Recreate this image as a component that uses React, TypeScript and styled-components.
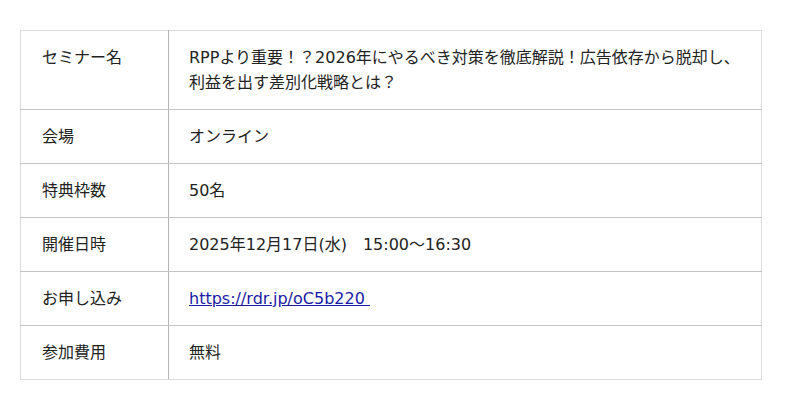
import React from "react";
import styled, { createGlobalStyle } from "styled-components";

const GlobalStyle = createGlobalStyle`
body {
  margin: 0;
  background: #fff;
}
`

const Page = styled.div`
padding: 30px 38px 0 20px;
font-family: "DejaVu Sans", "Noto Sans CJK JP", sans-serif;
font-size: 16px;
line-height: 25px;
color: #222;
`

const Table = styled.table`
width: 742px;
border-collapse: collapse;
border: 1px solid #dcdcdc;
`

const Cell = styled.td`
padding: 14px 21px;
vertical-align: top;
text-align: left;
border-bottom: 1px solid #c4c4c4;
tr:last-child > & {
  border-bottom: 1px solid #dcdcdc;
}
`

const Label = styled(Cell)`
width: 105px;
border-right: 1px solid #b4b4b4;
`

const Value = styled(Cell)`
padding: 14px 8px 14px 20px;
`

const Link = styled.a`
color: #1a1aa6;
text-decoration: underline;
white-space: pre;
`

const rows: { label: string; value: React.ReactNode }[] = [
  {
    label: "セミナー名",
    value:
      "RPPより重要！？2026年にやるべき対策を徹底解説！広告依存から脱却し、利益を出す差別化戦略とは？",
  },
  { label: "会場", value: "オンライン" },
  { label: "特典枠数", value: "50名" },
  { label: "開催日時", value: "2025年12月17日(水)　15:00〜16:30" },
  {
    label: "お申し込み",
    value: <Link href="https://rdr.jp/oC5b220">https://rdr.jp/oC5b220 </Link>,
  },
  { label: "参加費用", value: "無料" },
];

function App() {
  return (
    <>
      <GlobalStyle />
      <Page>
        <Table>
          <tbody>
            {rows.map((r) => (
              <tr key={r.label}>
                <Label>{r.label}</Label>
                <Value>{r.value}</Value>
              </tr>
            ))}
          </tbody>
        </Table>
      </Page>
    </>
  );
}

export default App;
